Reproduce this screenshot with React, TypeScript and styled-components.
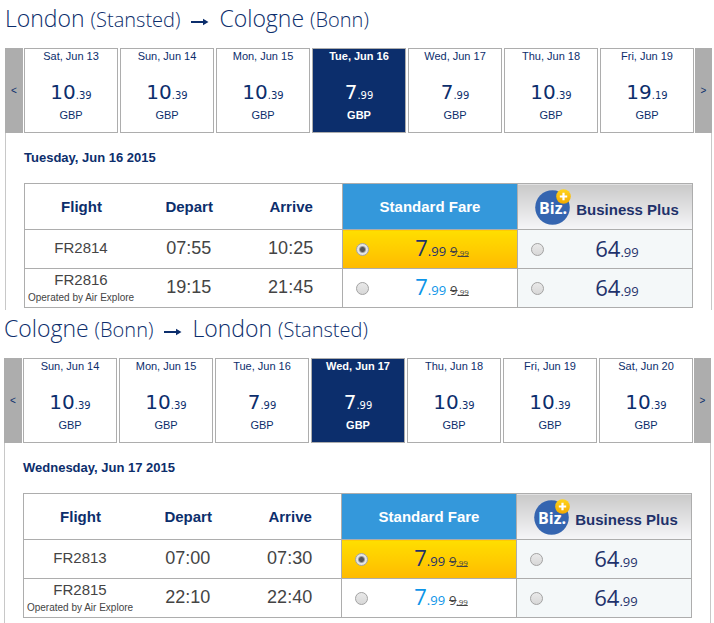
import React from "react";
import styled, { createGlobalStyle } from "styled-components";

const navy = "#0c2e6c";
const line = "#adadad";

const GlobalStyle = createGlobalStyle`
  * { box-sizing: border-box; }
  body {
    margin: 0;
    background: #fff;
    color: ${navy};
    font-family: "Liberation Sans", Arial, sans-serif;
  }
`;

const Journey = styled.section<{ $last?: boolean }>`
  padding: ${(p) => (p.$last ? "0 3px 0 4px" : "0 2px 0 5px")};
`;

const Route = styled.h2`
  display: flex;
  align-items: baseline;
  margin: 0;
  height: 48px;
  padding-top: 1px;
  font-family: "Open Sans", "Noto Sans", sans-serif;
  font-size: 23px;
  line-height: 34px;
  font-weight: 300;
  white-space: pre;
  small { font-size: 20px; }
  svg { margin: 0 10px 2px; }
`;

const Days = styled.div`
  display: flex;
  gap: 1px;
`;

const DayList = styled.div`
  flex: 1;
  display: flex;
  gap: 2px;
`;

const Pager = styled.button<{ $narrow?: boolean }>`
  width: ${(p) => (p.$narrow ? 17 : 18)}px;
  padding: 0;
  border: 0;
  background: ${line};
  color: ${navy};
  font: 10px "Liberation Sans", sans-serif;
`;

const Day = styled.button<{ $active: boolean }>`
  flex: 1;
  min-width: 0;
  display: flex;
  flex-direction: column;
  align-items: center;
  height: 85px;
  padding: 0;
  border: 1px solid ${line};
  background: ${(p) => (p.$active ? navy : "#fff")};
  color: ${(p) => (p.$active ? "#fff" : navy)};
  font: ${(p) => (p.$active ? "bold" : "normal")} 11px/14px "Liberation Sans", sans-serif;
`;

const DayPrice = styled.span`
  margin: 17px 0 4px;
  font: 20px/24px "DejaVu Sans", Verdana, sans-serif;
  small { font-size: 10px; line-height: 10px; }
`;

const Panel = styled.div<{ $last?: boolean }>`
  border: solid #c8c8c8;
  border-width: 0 1px;
  padding: 17px 18px ${(p) => (p.$last ? 6 : 2)}px;
`;

const PanelDate = styled.h3`
  margin: 0 0 17px;
  font-size: 13px;
  line-height: 16px;
`;

const Fares = styled.table`
  width: 100%;
  table-layout: fixed;
  border-collapse: collapse;
  border: 1px solid ${line};
  text-align: center;
`;

const Head = styled.th<{ $kind?: "standard" | "business" }>`
  width: ${(p) => (p.$kind ? "175px" : "auto")};
  height: 46px;
  padding: 0;
  border-bottom: 1px solid ${line};
  border-left: ${(p) => (p.$kind ? `1px solid ${line}` : "0")};
  font-size: 15px;
  color: ${(p) => (p.$kind === "standard" ? "#fff" : p.$kind ? "#1f326b" : navy)};
  background: ${(p) =>
    p.$kind === "standard" ? "#3498db" : p.$kind ? "linear-gradient(#c9c9c9, #f6f6f8)" : "#fff"};
`;

const FlightHead = styled(Head)`
  width: 17%;
`;

const BusinessTitle = styled.span`
  display: flex;
  align-items: center;
  justify-content: center;
  gap: 5px;
  padding: 5px 0 0 4px;
  svg { flex: none; margin-top: -5px; }
`;

const Cell = styled.td<{ $tone?: "picked" | "plain" | "business" }>`
  height: 39px;
  padding: ${(p) => (p.$tone ? "0" : "0 1px 2px 0")};
  border-bottom: 1px solid ${line};
  border-left: ${(p) => (p.$tone ? `1px solid ${line}` : "0")};
  background: ${(p) =>
    p.$tone === "picked" ? "linear-gradient(#ffdf00, #ffba00)" : p.$tone === "business" ? "#f4f8f9" : "#fff"};
  color: #444;
  font-size: 18px;
  white-space: nowrap;
`;

const FlightNo = styled.div`
  font-size: 15px;
  line-height: 20px;
`;

const Operator = styled.div`
  font-size: 10px;
  line-height: 15px;
`;

const Fare = styled.label`
  display: flex;
  align-items: center;
  padding-left: 13px;
`;

const Radio = styled.input`
  appearance: none;
  flex: none;
  width: 13px;
  height: 13px;
  margin: 0;
  border: 1px solid #a3a3a3;
  border-radius: 50%;
  background: linear-gradient(#e9e9e9, #d8d8d8);
  &:checked {
    background: radial-gradient(circle, #555 0 2px, #e4e4e4 4px);
  }
`;

const Price = styled.span<{ $tone: "picked" | "plain" | "business" }>`
  flex: 1;
  padding: 2px 2px 0 0;
  font: 22px/30px "Open Sans", "Noto Sans", sans-serif;
  color: ${(p) => (p.$tone === "plain" ? "#0d95e8" : "#1f326b")};
  small { font-size: 13px; }
`;

const OldPrice = styled.s`
  margin-left: 4px;
  font-size: 13px;
  color: #444;
  small { font-size: 8px; }
`;

const Arrow = () => (
  <svg width="19" height="9" viewBox="0 0 19 9" aria-hidden="true">
    <path d="M1 3h12V0.8L18.5 4 13 7.2V5H1z" fill={navy} />
  </svg>
);

const BizBadge = () => (
  <svg width="36" height="36" viewBox="0 0 36 36" aria-hidden="true">
    <defs>
      <linearGradient id="coin" x2="0" y2="1">
        <stop stopColor="#ffd51c" />
        <stop offset="1" stopColor="#f4a900" />
      </linearGradient>
    </defs>
    <circle cx="17.5" cy="18.5" r="17.3" fill="#3565b0" />
    <text
      x="4"
      y="25"
      fill="#fff"
      fontFamily='"Open Sans", "Noto Sans", sans-serif'
      fontWeight="bold"
      fontSize="16"
    >
      Biz.
    </text>
    <circle cx="28.5" cy="7.5" r="7.3" fill="url(#coin)" />
    <path d="M28.5 3.8v7.4M24.8 7.5h7.4" stroke="#fff" strokeWidth="2.2" />
  </svg>
);

type Place = [city: string, airport: string];
type DayFare = [label: string, whole: string, cents: string];
type Flight = { no: string; depart: string; arrive: string; operator?: string };

interface JourneyData {
  from: Place;
  to: Place;
  days: DayFare[];
  date: string;
  flights: Flight[];
}

const journeys: JourneyData[] = [
  {
    from: ["London", "Stansted"],
    to: ["Cologne", "Bonn"],
    days: [
      ["Sat, Jun 13", "10", "39"],
      ["Sun, Jun 14", "10", "39"],
      ["Mon, Jun 15", "10", "39"],
      ["Tue, Jun 16", "7", "99"],
      ["Wed, Jun 17", "7", "99"],
      ["Thu, Jun 18", "10", "39"],
      ["Fri, Jun 19", "19", "19"],
    ],
    date: "Tuesday, Jun 16 2015",
    flights: [
      { no: "FR2814", depart: "07:55", arrive: "10:25" },
      { no: "FR2816", depart: "19:15", arrive: "21:45", operator: "Operated by Air Explore" },
    ],
  },
  {
    from: ["Cologne", "Bonn"],
    to: ["London", "Stansted"],
    days: [
      ["Sun, Jun 14", "10", "39"],
      ["Mon, Jun 15", "10", "39"],
      ["Tue, Jun 16", "7", "99"],
      ["Wed, Jun 17", "7", "99"],
      ["Thu, Jun 18", "10", "39"],
      ["Fri, Jun 19", "10", "39"],
      ["Sat, Jun 20", "10", "39"],
    ],
    date: "Wednesday, Jun 17 2015",
    flights: [
      { no: "FR2813", depart: "07:00", arrive: "07:30" },
      { no: "FR2815", depart: "22:10", arrive: "22:40", operator: "Operated by Air Explore" },
    ],
  },
];

function JourneyView({ data, last }: { data: JourneyData; last: boolean }) {
  const [day, setDay] = React.useState(3);
  const [fare, setFare] = React.useState(`${data.flights[0].no}-standard`);
  const radio = (value: string) => (
    <Radio type="radio" name={data.date} value={value} checked={fare === value} onChange={() => setFare(value)} />
  );

  return (
    <Journey $last={last}>
      <Route>
        <span>{data.from[0]} <small>({data.from[1]})</small></span>
        <Arrow />
        <span>{data.to[0]} <small>({data.to[1]})</small></span>
      </Route>
      <Days>
        <Pager aria-label="Earlier days">&lt;</Pager>
        <DayList>
          {data.days.map(([label, whole, cents], i) => (
            <Day key={label} $active={i === day} onClick={() => setDay(i)}>
              <span>{label}</span>
              <DayPrice>{whole}<small>.{cents}</small></DayPrice>
              <span>GBP</span>
            </Day>
          ))}
        </DayList>
        <Pager $narrow aria-label="Later days">&gt;</Pager>
      </Days>
      <Panel $last={last}>
        <PanelDate>{data.date}</PanelDate>
        <Fares>
          <thead>
            <tr>
              <FlightHead>Flight</FlightHead>
              <Head>Depart</Head>
              <Head>Arrive</Head>
              <Head $kind="standard">Standard Fare</Head>
              <Head $kind="business">
                <BusinessTitle><BizBadge />Business Plus</BusinessTitle>
              </Head>
            </tr>
          </thead>
          <tbody>
            {data.flights.map((f) => {
              const tone = fare === `${f.no}-standard` ? "picked" : "plain";
              return (
                <tr key={f.no}>
                  <Cell>
                    <FlightNo>{f.no}</FlightNo>
                    {f.operator && <Operator>{f.operator}</Operator>}
                  </Cell>
                  <Cell>{f.depart}</Cell>
                  <Cell>{f.arrive}</Cell>
                  <Cell $tone={tone}>
                    <Fare>
                      {radio(`${f.no}-standard`)}
                      <Price $tone={tone}>
                        7<small>.99</small>
                        <OldPrice>9<small>.99</small></OldPrice>
                      </Price>
                    </Fare>
                  </Cell>
                  <Cell $tone="business">
                    <Fare>
                      {radio(`${f.no}-business`)}
                      <Price $tone="business">64<small>.99</small></Price>
                    </Fare>
                  </Cell>
                </tr>
              );
            })}
          </tbody>
        </Fares>
      </Panel>
    </Journey>
  );
}

export default function App() {
  return (
    <main>
      <GlobalStyle />
      {journeys.map((j, i) => (
        <JourneyView key={j.date} data={j} last={i === journeys.length - 1} />
      ))}
    </main>
  );
}
